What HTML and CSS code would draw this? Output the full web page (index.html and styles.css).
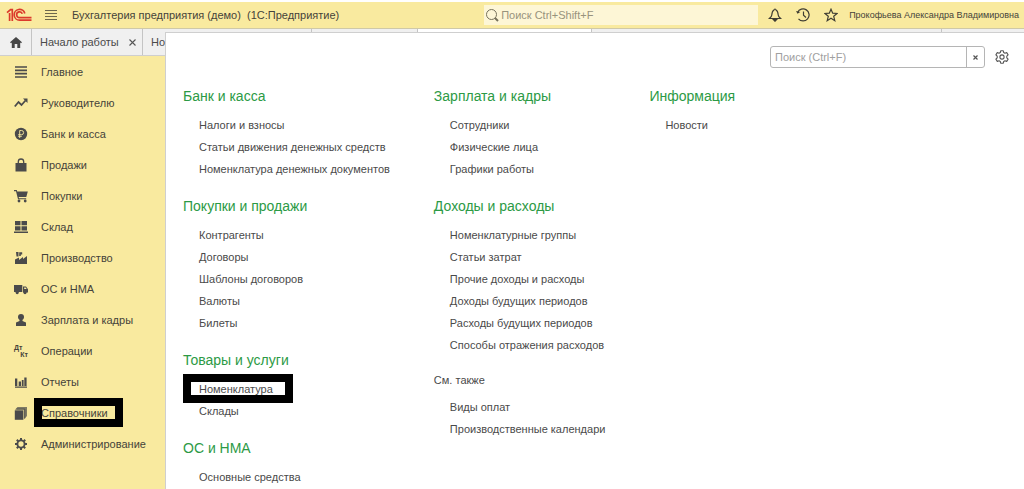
FILE: index.html
```html
<!DOCTYPE html>
<html lang="ru">
<head>
<meta charset="utf-8">
<title>Бухгалтерия предприятия</title>
<link rel="stylesheet" href="styles.css">
</head>
<body>
<header class="topbar">
  <svg class="logo" width="26" height="14" viewBox="0 0 26 14" fill="none" stroke="#dc3a2c" stroke-width="1.7" aria-label="1С" role="img">
    <path d="M1 4.600 4.600 1.600H6.300V13M3.600 5V13"/>
    <path d="M18.800 5.500A5.400 5.400 0 1 0 13.500 12.200H25.500"/>
    <path d="M16.300 5.800A2.900 2.900 0 1 0 13.500 9.600H25.500"/>
  </svg>
  <button class="icon-btn burger" aria-label="Меню">
    <svg width="14" height="12" viewBox="0 0 14 12" stroke="#6d674d" stroke-width="1.200"><path d="M1 1.500H13M1 4.500H13M1 7.500H13M1 10.500H13"/></svg>
  </button>
  <h1 class="app-title">Бухгалтерия предприятия (демо)&nbsp; (1С:Предприятие)</h1>
  <label class="global-search">
    <svg width="15" height="15" viewBox="0 0 15 15" fill="none" stroke="#77725c"><circle cx="6.500" cy="6.500" r="5"/><path d="M10 10 13 13" stroke-width="2"/></svg>
    <input type="search" placeholder="Поиск Ctrl+Shift+F" aria-label="Поиск">
  </label>
  <div class="tools">
    <button class="icon-btn" aria-label="Уведомления"><svg width="14" height="14" viewBox="0 0 14 14" fill="none" stroke="#3f3d33" stroke-width="1.200"><path d="M7 1C7.800 1 8 1.600 8.200 2.200 10 3 10 5.200 10.200 7 10.400 8.600 11.500 9.400 12.600 10.500H1.400C2.500 9.400 3.600 8.600 3.800 7 4 5.200 4 3 5.800 2.200 6 1.600 6.200 1 7 1Z"/><path d="M5.400 11.500H8.600L7 13.200Z" fill="#3f3d33"/></svg></button>
    <button class="icon-btn" aria-label="История"><svg width="14" height="14" viewBox="0 0 14 14" fill="none" stroke="#3f3d33" stroke-width="1.200"><path d="M1.600 4.500A6 6 0 1 1 2.500 10.800M7.500 3.500V7.300L10 9.500"/><path d="M0 3 1.500 5.800 4.300 4Z" fill="#3f3d33" stroke="none"/></svg></button>
    <button class="icon-btn" aria-label="Избранное"><svg width="14" height="14" viewBox="0 0 14 14" fill="none" stroke="#3f3d33" stroke-width="1.200"><path d="M7 1.200 8.700 5.200 13 5.500 9.700 8.300 10.800 12.700 7 10.300 3.200 12.700 4.300 8.300 1 5.500 5.300 5.200Z"/></svg></button>
  </div>
  <a class="user" href="#">Прокофьева Александра Владимировна</a>
</header>

<nav class="tabs" aria-label="Открытые окна">
  <button class="tab tab-home" aria-label="Начальная страница"><svg width="12" height="11" viewBox="0 0 12 11" fill="#474747"><path d="M6 0 12 5.200 11 6.200 10.200 5.500V11H7.300V7H4.700V11H1.800V5.500L1 6.200 0 5.200Z"/></svg></button>
  <div class="tab tab-start"><span>Начало работы</span><button class="tab-close" aria-label="Закрыть"><svg width="7" height="7" viewBox="0 0 7 7" stroke="#555" stroke-width="1.100"><path d="M.5.5 6.500 6.500M6.500.5.5 6.500"/></svg></button></div>
  <div class="tab tab-list">Но</div>
  <div class="tab tab-short"></div>
  <div class="tab tab-active"></div>
  <div class="tab tab-wide"></div>
  <div class="tab tab-rest"></div>
</nav>

<div class="workspace">
  <nav class="sidebar" aria-label="Разделы">
    <a class="section" href="#"><svg class="ico" viewBox="0 0 14 14" stroke="#4b4b4b" stroke-width="1.700"><path d="M1 2H13M1 5.300H13M1 8.600H13M1 12H13"/></svg><span>Главное</span></a>
    <a class="section" href="#"><svg class="ico" viewBox="0 0 14 14" fill="none" stroke="#4b4b4b" stroke-width="1.800"><path d="M.8 10.500 4.500 6 7.500 9 11.500 4.500"/><path d="M9 2.500H13.500V7Z" fill="#4b4b4b" stroke="none"/></svg><span>Руководителю</span></a>
    <a class="section" href="#"><svg class="ico" viewBox="0 0 14 14"><circle cx="7" cy="7" r="6.200" fill="#4b4b4b"/><path d="M5.700 11V3.500H7.500A2 2 0 0 1 7.500 7.700H4.200M4.200 9.300H7.800" fill="none" stroke="#f9ea9f" stroke-width=".9"/></svg><span>Банк и касса</span></a>
    <a class="section" href="#"><svg class="ico" viewBox="0 0 14 14" fill="#4b4b4b"><path d="M1.500 5H12.500V13.500H1.500Z"/><path d="M4.300 6.500V3.700A2.700 2.700 0 0 1 9.700 3.700V6.500" fill="none" stroke="#4b4b4b" stroke-width="1.300"/></svg><span>Продажи</span></a>
    <a class="section" href="#"><svg class="ico" viewBox="0 0 14 14" fill="#4b4b4b"><path d="M0 1H2.800L3.200 2.500H13.800L12.300 8H4.700L5 9.200H12.200V10.300H4L2 2.300H0Z"/><circle cx="5" cy="12" r="1.400"/><circle cx="11.200" cy="12" r="1.400"/></svg><span>Покупки</span></a>
    <a class="section" href="#"><svg class="ico" viewBox="0 0 14 14" fill="#4b4b4b"><path d="M1 1H6.500V5.200H1ZM7.500 1H13V5.200H7.500ZM1 6.200H6.500V10.500H1ZM7.500 6.200H13V10.500H7.500ZM0 11.500H14V13H0Z"/></svg><span>Склад</span></a>
    <a class="section" href="#"><svg class="ico" viewBox="0 0 14 14" fill="#4b4b4b"><path d="M1 13V8.500L5 6.500V9L9 6V8L13 5V13ZM2 1H4.500V5.500H2.500ZM5.200 1.200H8.200V3.500H6.800V5H5.200Z"/></svg><span>Производство</span></a>
    <a class="section" href="#"><svg class="ico" viewBox="0 0 14 14" fill="#4b4b4b"><path d="M0 3H8.300V10H0ZM9 4.500H12L14 7.200V10.500H9Z"/><path d="M10.200 5.500H11.600L12.600 7H10.200Z" fill="#f9ea9f"/><circle cx="3.200" cy="10.600" r="1.600"/><circle cx="11" cy="10.600" r="1.600"/></svg><span>ОС и НМА</span></a>
    <a class="section" href="#"><svg class="ico" viewBox="0 0 14 14" fill="#4b4b4b"><circle cx="7" cy="4" r="3"/><path d="M5.500 6H8.500V8L12 9.500V13H2V9.500L5.500 8Z"/></svg><span>Зарплата и кадры</span></a>
    <a class="section" href="#"><span class="ico dtkt" aria-hidden="true"><b>Дт</b><b class="kt">Кт</b></span><span>Операции</span></a>
    <a class="section" href="#"><svg class="ico" viewBox="0 0 14 14" fill="#4b4b4b"><path d="M1 3.500H3.300V11H1ZM4.700 6.500H7V11H4.700ZM7.800 5H9.600V11H7.800ZM10.300 2.500H12.600V11H10.300ZM1 11.500H13V12.700H1Z"/></svg><span>Отчеты</span></a>
    <a class="section" href="#"><svg class="ico" viewBox="0 0 14 14" fill="#4b4b4b"><path d="M.8 4.300H9.300V13.800H.8Z"/><path d="M1 3.800 3.500 1H13V10L9.800 13.500V3.800Z" opacity=".7"/><path d="M2.500 3H10.800V12.300" fill="none" stroke="#4b4b4b" stroke-width=".8"/></svg><span class="marked marked-section">Справочники</span></a>
    <a class="section" href="#"><svg class="ico" viewBox="0 0 14 14" fill="none" stroke="#4b4b4b"><circle cx="7" cy="7" r="3.600" stroke-width="1.900"/><path d="M7 1V3M7 11V13M1 7H3M11 7H13M2.800 2.800 4.200 4.200M9.800 9.800 11.200 11.200M11.200 2.800 9.800 4.200M4.200 9.800 2.800 11.200" stroke-width="2"/></svg><span>Администрирование</span></a>
  </nav>

  <main class="menu">
    <form class="menu-tools">
      <div class="menu-search">
        <input type="text" placeholder="Поиск (Ctrl+F)" aria-label="Поиск в меню">
        <button type="reset" aria-label="Очистить"><svg width="5" height="5" viewBox="0 0 5 5" stroke="#555" stroke-width="1.200"><path d="M.5.5 4.500 4.500M4.500.5.5 4.500"/></svg></button>
      </div>
      <button type="button" class="icon-btn" aria-label="Настройки"><svg width="14" height="14" viewBox="0 0 14 14" fill="none" stroke="#555" stroke-width="1.100" stroke-linejoin="round"><path d="M5.700.8H8.300L8.700 2.500 10 3.200 11.700 2.600 13.100 4.900 11.800 6.200V7.800L13.100 9.100 11.700 11.400 10 10.800 8.700 11.500 8.300 13.200H5.700L5.300 11.500 4 10.800 2.300 11.400.9 9.100 2.200 7.800V6.200L.9 4.900 2.300 2.600 4 3.200 5.300 2.500Z"/><circle cx="7" cy="7" r="2.100"/></svg></button>
    </form>
    <div class="columns">
      <div class="column">
        <section class="group">
          <h2>Банк и касса</h2>
          <ul><li><a href="#">Налоги и взносы</a></li><li><a href="#">Статьи движения денежных средств</a></li><li><a href="#">Номенклатура денежных документов</a></li></ul>
        </section>
        <section class="group">
          <h2>Покупки и продажи</h2>
          <ul><li><a href="#">Контрагенты</a></li><li><a href="#">Договоры</a></li><li><a href="#">Шаблоны договоров</a></li><li><a href="#">Валюты</a></li><li><a href="#">Билеты</a></li></ul>
        </section>
        <section class="group">
          <h2>Товары и услуги</h2>
          <ul><li><a href="#" class="marked marked-item">Номенклатура</a></li><li><a href="#">Склады</a></li></ul>
        </section>
        <section class="group">
          <h2>ОС и НМА</h2>
          <ul><li><a href="#">Основные средства</a></li></ul>
        </section>
      </div>
      <div class="column">
        <section class="group">
          <h2>Зарплата и кадры</h2>
          <ul><li><a href="#">Сотрудники</a></li><li><a href="#">Физические лица</a></li><li><a href="#">Графики работы</a></li></ul>
        </section>
        <section class="group">
          <h2>Доходы и расходы</h2>
          <ul><li><a href="#">Номенклатурные группы</a></li><li><a href="#">Статьи затрат</a></li><li><a href="#">Прочие доходы и расходы</a></li><li><a href="#">Доходы будущих периодов</a></li><li><a href="#">Расходы будущих периодов</a></li><li><a href="#">Способы отражения расходов</a></li></ul>
        </section>
        <section class="group see-also">
          <h2>См. также</h2>
          <ul><li><a href="#">Виды оплат</a></li><li><a href="#">Производственные календари</a></li></ul>
        </section>
      </div>
      <div class="column">
        <section class="group">
          <h2>Информация</h2>
          <ul><li><a href="#">Новости</a></li></ul>
        </section>
      </div>
    </div>
  </main>
</div>
</body>
</html>
```

FILE: styles.css
```css
* { box-sizing: border-box; }

body {
  margin: 0;
  min-height: 100vh;
  display: flex;
  flex-direction: column;
  position: relative;
  overflow: hidden;
  background: #fff;
  color: #4a4a4a;
  font: 11px/22px "Liberation Sans", Arial, sans-serif;
}

a { color: inherit; text-decoration: none; }
button, input { font: inherit; color: inherit; }
svg { display: block; flex: none; }

.icon-btn {
  display: flex;
  padding: 0;
  border: 0;
  background: none;
}

/* Top bar */
.topbar {
  display: flex;
  align-items: center;
  height: 26px;
  margin-top: 2px;
  padding: 0 5px 0 6px;
  background: #f9ea9f;
}
.burger { margin-left: 12px; }
.app-title {
  flex: 1;
  margin: 0 0 0 14px;
  color: #45433a;
  font-size: 11px;
  font-weight: 400;
  white-space: nowrap;
}
.global-search {
  display: flex;
  align-items: center;
  width: 274px;
  height: 20px;
  padding-left: 1px;
  background: #fdf6d6;
}
.global-search input {
  flex: 1;
  min-width: 0;
  padding: 0 0 0 1px;
  border: 0;
  outline: 0;
  background: none;
}
.global-search input::placeholder { color: #98937d; opacity: 1; }
.tools {
  display: flex;
  gap: 14px;
  margin: 0 11px 0 10px;
}
.user { color: #45433a; font-size: 9px; white-space: nowrap; }

/* Window tabs */
.tabs {
  display: flex;
  height: 28px;
  border-top: 1px solid #cfc9a8;
  border-bottom: 1px solid #cfcfcf;
  background: #f0f0f0;
}
.tab {
  display: flex;
  align-items: center;
  border: 0;
  border-right: 1px solid #c4c4c4;
  background: #f0f0f0;
}
.tab-home { justify-content: center; width: 32px; padding: 0; }
.tab-start { justify-content: space-between; width: 111px; padding: 0 6px 0 8px; white-space: nowrap; }
.tab-close { padding: 0; border: 0; background: none; }
.tab-list { width: 169px; padding-left: 8px; }
.tab-short { width: 106px; }
.tab-active { width: 174px; background: #fff; }
.tab-wide { width: 350px; }
.tab-rest { flex: 1; border-right: 0; }

/* Sections */
.workspace { display: flex; flex: 1; }
.sidebar {
  width: 165px;
  background: #f9ea9f;
}
.section {
  display: flex;
  align-items: center;
  gap: 13px;
  height: 31px;
  padding-left: 14px;
  color: #45433a;
  white-space: nowrap;
}
.ico { flex: none; width: 14px; height: 14px; }
.dtkt {
  display: flex;
  flex-direction: column;
  font-size: 7px;
  line-height: 7px;
}
.kt { align-self: flex-end; }

/* Section menu laid over the window */
.menu {
  position: absolute;
  inset: 32px 0 0 165px;
  padding: 13px 15px 0 17px;
  border-top: 1px solid #cfcfcf;
  border-left: 1px solid #cfcfcf;
  background: #fff;
}
.menu-tools {
  display: flex;
  justify-content: flex-end;
  align-items: center;
  gap: 10px;
}
.menu-search {
  display: flex;
  width: 215px;
  height: 22px;
  border: 1px solid #b5b5b5;
  border-radius: 3px;
}
.menu-search input {
  flex: 1;
  min-width: 0;
  padding: 0 4px;
  border: 0;
  outline: 0;
  background: none;
}
.menu-search input::placeholder { color: #a0a0a0; opacity: 1; }
.menu-search button {
  display: flex;
  justify-content: center;
  align-items: center;
  width: 18px;
  padding: 0;
  border: 0;
  border-left: 1px solid #b5b5b5;
  background: none;
}
.columns {
  display: flex;
  gap: 44px;
  margin-top: 16px;
}
.column {
  display: flex;
  flex-direction: column;
  gap: 14px;
  white-space: nowrap;
}
.group h2 {
  margin: 0 0 6px;
  color: #2c9a45;
  font-size: 14px;
  font-weight: 400;
  line-height: 24px;
}
.group ul {
  margin: 0;
  padding: 0 0 0 16px;
  list-style: none;
}
.see-also h2 {
  color: #4a4a4a;
  font-size: 11px;
  line-height: 20px;
}

/* Thick black frames */
.marked { position: relative; }
.marked::after {
  content: "";
  position: absolute;
  border: 8px solid #000;
  pointer-events: none;
}
.marked-section::after { inset: -4px -15px -3px -7px; }
.marked-item::after { inset: -9px -20px -8px -16px; }
```
